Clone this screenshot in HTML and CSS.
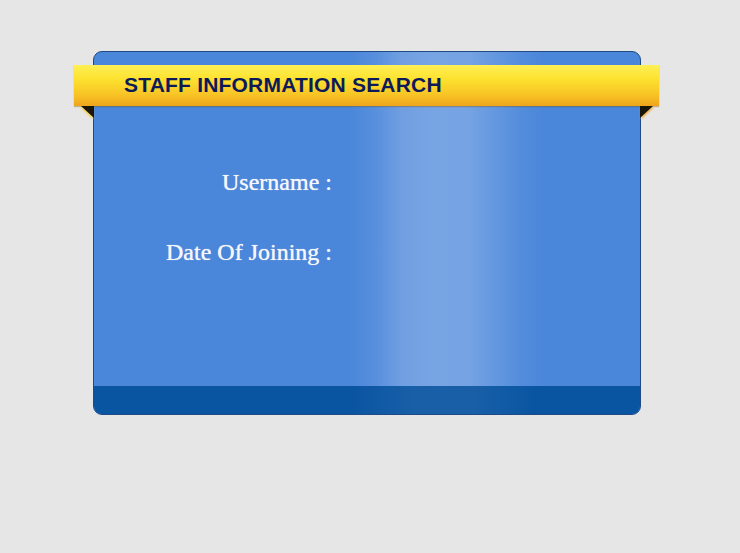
FILE: index.html
```html
<!DOCTYPE html>
<html>
<head>
<meta charset="utf-8">
<link rel="stylesheet" href="styles.css">
</head>
<body>
<div class="page">
  <div class="panel">
    <div class="ribbon"><h1 class="title">STAFF INFORMATION SEARCH</h1></div>
    <div class="form">
      <div class="row"><label class="label">Username :</label><div class="field"></div></div>
      <div class="row"><label class="label">Date Of Joining :</label><div class="field"></div></div>
    </div>
    <div class="footer"></div>
  </div>
</div>
</body>
</html>
```
FILE: styles.css
```css
html, body {
  margin: 0;
  padding: 0;
}
body {
  background: #e6e6e6;
  width: 740px;
  height: 553px;
  overflow: hidden;
}
.page {
  padding: 51px 0 0 93px;
}
.panel {
  position: relative;
  box-sizing: border-box;
  width: 548px;
  height: 364px;
  border: 1px solid #1f4a86;
  border-radius: 9px;
  background:
    linear-gradient(90deg,
      rgba(255,255,255,0) 0px,
      rgba(255,255,255,0) 255px,
      rgba(255,255,255,0.08) 282px,
      rgba(255,255,255,0.21) 308px,
      rgba(255,255,255,0.25) 340px,
      rgba(255,255,255,0.24) 375px,
      rgba(255,255,255,0.14) 402px,
      rgba(255,255,255,0.05) 428px,
      rgba(255,255,255,0) 450px),
    #4a86da;
  display: flex;
  flex-direction: column;
}
.ribbon {
  position: relative;
  margin: 13px -19px 0 -20px;
  height: 41px;
  background: linear-gradient(180deg, #fff055 0%, #fde12e 35%, #f8c626 70%, #efa51c 100%);
  box-shadow: 0 1px 1px rgba(120,80,0,0.35);
  display: flex;
  align-items: center;
}
.ribbon::before,
.ribbon::after {
  content: "";
  position: absolute;
  top: 41px;
  width: 0;
  height: 0;
  border-top: 12px solid #1a160a;
}
.ribbon::before {
  left: 7px;
  border-left: 13px solid transparent;
  filter: drop-shadow(-1px 1px 1px #f5d23a);
}
.ribbon::after {
  right: 6px;
  border-right: 13px solid transparent;
  filter: drop-shadow(1px 1px 1px #f0a830);
}
.title {
  margin: -1px 0 0 50px;
  font-family: "Liberation Sans", Arial, sans-serif;
  font-weight: bold;
  font-size: 21px;
  letter-spacing: 0.2px;
  color: #0c1a5a;
}
.form {
  flex: 1;
  padding-top: 63px;
  display: flex;
  flex-direction: column;
  gap: 44px;
}
.row {
  display: flex;
  height: 26px;
  align-items: center;
}
.label {
  width: 238px;
  text-align: right;
  font-family: "Liberation Serif", "Times New Roman", serif;
  font-weight: normal;
  font-size: 24px;
  color: #f4f6fb;
  text-shadow: 0 0 0.8px #f4f6fb;
}
.footer {
  height: 28px;
  border-radius: 0 0 8px 8px;
  background:
    linear-gradient(90deg,
      rgba(255,255,255,0) 260px,
      rgba(255,255,255,0.06) 320px,
      rgba(255,255,255,0.06) 380px,
      rgba(255,255,255,0) 440px),
    #0a55a2;
}
```
